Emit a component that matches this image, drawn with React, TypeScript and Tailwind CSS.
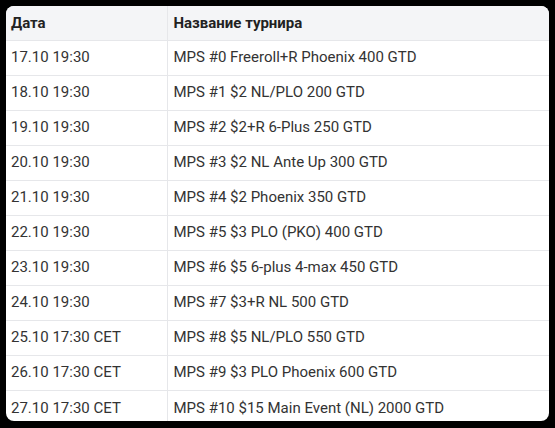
const rows: [string, string][] = [
  ["17.10 19:30", "MPS #0 Freeroll+R Phoenix 400 GTD"],
  ["18.10 19:30", "MPS #1 $2 NL/PLO 200 GTD"],
  ["19.10 19:30", "MPS #2 $2+R 6-Plus 250 GTD"],
  ["20.10 19:30", "MPS #3 $2 NL Ante Up 300 GTD"],
  ["21.10 19:30", "MPS #4 $2 Phoenix 350 GTD"],
  ["22.10 19:30", "MPS #5 $3 PLO (PKO) 400 GTD"],
  ["23.10 19:30", "MPS #6 $5 6-plus 4-max 450 GTD"],
  ["24.10 19:30", "MPS #7 $3+R NL 500 GTD"],
  ["25.10 17:30 CET", "MPS #8 $5 NL/PLO 550 GTD"],
  ["26.10 17:30 CET", "MPS #9 $3 PLO Phoenix 600 GTD"],
  ["27.10 17:30 CET", "MPS #10 $15 Main Event (NL) 2000 GTD"],
];

export default function App() {
  return (
    <div className="w-[555px] h-[428px] bg-black pt-[6px] pl-[6px]">
      <div
        className="w-[543px] h-[415px] overflow-hidden rounded-lg bg-white text-[15px] text-[#333]"
        style={{ fontFamily: "Roboto, 'Noto Sans', sans-serif" }}
      >
        <table className="w-full border-collapse">
          <thead>
            <tr className="bg-[#f4f5f7] h-[34px] border-b border-[#e6e7ea]">
              <th className="w-[161px] text-left font-bold text-[#222] pl-[5px] border-r border-[#e6e7ea]">
                Дата
              </th>
              <th className="text-left font-bold text-[#222] pl-[6px]">Название турнира</th>
            </tr>
          </thead>
          <tbody>
            {rows.map(([d, n]) => (
              <tr key={d} className="h-[35px] border-b border-[#e6e7ea] last:border-b-0">
                <td className="pl-[5px] border-r border-[#e6e7ea]">{d}</td>
                <td className="pl-[6px]">{n}</td>
              </tr>
            ))}
          </tbody>
        </table>
      </div>
    </div>
  );
}
